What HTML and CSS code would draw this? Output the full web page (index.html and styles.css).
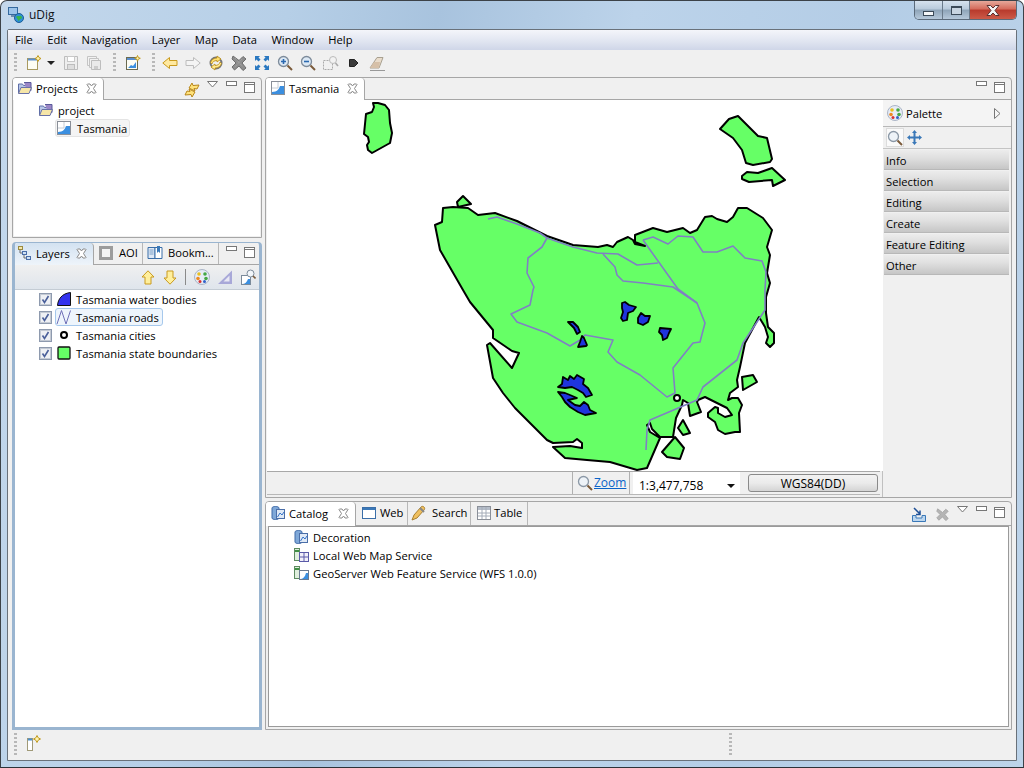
FILE: index.html
```html
<!DOCTYPE html>
<html lang="en">
<head>
<meta charset="utf-8">
<title>uDig</title>
<link rel="stylesheet" href="styles.css">
</head>
<body>
<svg class="defs" width="0" height="0">
  <defs>
    <symbol id="close" viewBox="0 0 11 11"><path d="M1.500 1 4 1 5.500 3 7 1 9.500 1 10 1.500 7.500 5.500 10 9.500 9.500 10 7 10 5.500 8 4 10 1.500 10 1 9.500 3.500 5.500 1 1.500Z" fill="#fff" stroke="#8a8a8a"/></symbol>
    <symbol id="chev" viewBox="0 0 11 7"><path d="M.5.5h10L5.500 6Z" fill="#fff" stroke="#777"/></symbol>
    <symbol id="min" viewBox="0 0 11 6"><rect x=".5" y=".5" width="10" height="4" fill="#fff" stroke="#777"/></symbol>
    <symbol id="max" viewBox="0 0 11 11"><rect x=".5" y=".5" width="10" height="10" fill="#fff" stroke="#777"/><path d="M1 2.500h9" stroke="#777"/></symbol>
    <symbol id="mapdoc" viewBox="0 0 16 16"><rect x="1.500" y="1.500" width="13" height="13" fill="#fff" stroke="#8a8f98"/><path d="M2 8h6V2" fill="none" stroke="#c6ccd4"/><path d="M2 14v-2C7 12 9 9 10 6h4v8Z" fill="#3b8fe0"/></symbol>
    <symbol id="folder" viewBox="0 0 16 16"><path d="M1.500 13V4h4l1 1.500H10V13Z" fill="#b8c7e8" stroke="#5f6fa8"/><path d="M7 2.500h7v8H10" fill="#9a86c6" stroke="#5a5a9a"/><path d="M1.500 13.500 4 7.500h10.500L12 13.500Z" fill="#f6e6a8" stroke="#6a72a8"/></symbol>
    <symbol id="mag" viewBox="0 0 16 16"><circle cx="6.500" cy="6.500" r="5" fill="#eef3f8" stroke="#8b98a6" stroke-width="1.300"/><path d="M10.500 10.500 15 15" stroke="#7a5a3a" stroke-width="2"/></symbol>
    <symbol id="db" viewBox="0 0 16 16"><path d="M2 3c0-2 7-2 7 0v10c0 2-7 2-7 0Z" fill="#7fa8d8" stroke="#3f6aa8"/><rect x="6.500" y="4.500" width="8" height="9" fill="#dfe9f6" stroke="#4a6ea8"/><path d="M7.500 12 10 8l2 2 2-3" fill="none" stroke="#3573c8"/></symbol>
    <symbol id="svcgrid" viewBox="0 0 16 16"><rect x="1.500" y="1.500" width="5" height="12" fill="#dfeedd" stroke="#5d8a60"/><path d="M2 4h4" stroke="#3f8f44" stroke-width="2"/><rect x="6.500" y="5.500" width="9" height="9" fill="#f2f0fa" stroke="#5a5aa8"/><path d="M11 6v8M7 10h8" stroke="#5a5aa8"/></symbol>
    <symbol id="svcmap" viewBox="0 0 16 16"><rect x="1.500" y="1.500" width="5" height="12" fill="#dfeedd" stroke="#5d8a60"/><path d="M2 4h4" stroke="#3f8f44" stroke-width="2"/><rect x="6.500" y="5.500" width="9" height="9" fill="#fff" stroke="#6a7a90"/><path d="M7 14c3 0 5-2 6-6h2v6Z" fill="#3b8fe0"/></symbol>
    <symbol id="check" viewBox="0 0 13 13"><rect x=".5" y=".5" width="12" height="12" fill="#dfe3ea" stroke="#8e9aae"/><rect x="1.500" y="1.500" width="10" height="10" fill="#eef0f4" stroke="#c4cad4"/><path d="M3.500 6.500 5.500 9.500 9.500 3" fill="none" stroke="#4a5f9a" stroke-width="1.600"/></symbol>
  </defs>
</svg>
<div class="window">
  <header class="titlebar">
    <svg class="appicon" width="16" height="16" viewBox="0 0 16 16"><rect x=".5" y=".5" width="9" height="7" fill="#9cc4ea" stroke="#34699e"/><rect x="3" y="8" width="4" height="2" fill="#6a8db0"/><circle cx="11" cy="11" r="4.500" fill="#2f8fd8" stroke="#1c5e96"/><path d="M8 10c2-2 3 0 4-1s2 1 2 2-2 0-3 3c-1 0-1-2-3-4Z" fill="#39b54a"/></svg>
    <span class="apptitle">uDig</span>
    <div class="winbtns">
      <div class="winbtn winmin"><span class="glyph-min"></span></div>
      <div class="winbtn winmax"><span class="glyph-max"></span></div>
      <div class="winbtn winclose"><svg width="14" height="11" viewBox="0 0 14 11"><path d="M1 .5h3.500L7 3 9.500.5H13L9 5.500 13 10.500H9.500L7 8 4.500 10.500H1L5 5.500Z" fill="#f4f4f4" stroke="#5a3030"/></svg></div>
    </div>
  </header>
  <div class="client">
    <nav class="menubar">
      <span>File</span><span>Edit</span><span>Navigation</span><span>Layer</span><span>Map</span><span>Data</span><span>Window</span><span>Help</span>
    </nav>
    <div class="toolbar">
      <i class="grip"></i>
      <div class="tbgroup first">
        <svg width="16" height="16" viewBox="0 0 16 16"><rect x="1.500" y="3.500" width="10" height="11" fill="#fdfdf4" stroke="#a89a60"/><path d="M2 4.500h9" stroke="#5a8fd0" stroke-width="2"/><path d="M12 .5l1 2 2 1-2 1-1 2-1-2-2-1 2-1Z" fill="#fff3b0" stroke="#c09a20"/></svg>
        <svg class="tbarrow" width="8" height="4" viewBox="0 0 8 4"><path d="M0 0h8L4 4Z" fill="#222"/></svg>
        <svg class="after-arrow" width="16" height="16" viewBox="0 0 16 16"><path d="M1.500 1.500h13v13h-13Z" fill="#eee" stroke="#bdbdbd"/><rect x="4.500" y="1.500" width="7" height="5" fill="#fff" stroke="#c8c8c8"/><rect x="4.500" y="9.500" width="7" height="5" fill="#ddd" stroke="#bdbdbd"/></svg>
        <svg width="16" height="16" viewBox="0 0 16 16"><path d="M1.500 1.500h9v9h-9Z" fill="#f2f2f2" stroke="#c4c4c4"/><path d="M3.500 3.500h9v9h-9Z" fill="#f2f2f2" stroke="#c4c4c4"/><path d="M5.500 5.500h9v9h-9Z" fill="#eaeaea" stroke="#bdbdbd"/><rect x="8" y="11" width="4" height="3" fill="#ccc"/></svg>
      </div>
      <i class="grip gap-grip"></i>
      <div class="tbgroup second">
        <svg width="16" height="16" viewBox="0 0 16 16"><rect x="1.500" y="2.500" width="11" height="12" fill="#fdfdf4" stroke="#6a6a50"/><path d="M2 4h10" stroke="#5a8fd0" stroke-width="2"/><path d="M3 13l3-3 2 1 3-4v6Z" fill="#3b8fe0"/><path d="M12.500.5l.8 2 2 .8-2 .8-.8 2-.8-2-2-.8 2-.8Z" fill="#fff3b0" stroke="#c09a20"/></svg>
      </div>
      <i class="grip gap-grip"></i>
      <div class="tbgroup third">
        <svg width="16" height="16" viewBox="0 0 16 16"><path d="M.8 8 7.500 2.500V5.500H15V10.500H7.500V13.500Z" fill="#ffe9a0" stroke="#c99a1e"/></svg>
        <svg width="16" height="16" viewBox="0 0 16 16"><path d="M15.200 8 8.500 2.500V5.500H1V10.500H8.500V13.500Z" fill="#f4f4f4" stroke="#bcbcbc"/></svg>
        <svg width="16" height="16" viewBox="0 0 16 16"><circle cx="8" cy="8" r="5.500" fill="none" stroke="#777" stroke-width="2"/><path d="M9 1 13 4 9 7V5.500C6 5.500 4.500 7 4 9L2.500 7.500C3.500 4.500 6 3 9 3Z" fill="#ffdf70" stroke="#b88a14" stroke-width=".8"/><path d="M7 15 3 12 7 9V10.500C10 10.500 11.500 9 12 7L13.500 8.500C12.500 11.500 10 13 7 13Z" fill="#ffe990" stroke="#b88a14" stroke-width=".8"/></svg>
        <svg width="16" height="16" viewBox="0 0 16 16"><path d="M2 1 8 5.500 12 1.500 15 4 11 8 15 13 12 15.500 8 11 3.500 15 1 12 5 8 1 4Z" fill="#8e8e8e" stroke="#6e6e6e"/><path d="M4 3 12 12M11 4 4 12" stroke="#a8a8a8" stroke-dasharray="1 1"/></svg>
        <svg width="16" height="16" viewBox="0 0 16 16"><path d="M1 1h5L4.500 2.500 6.500 4.500 4.500 6.500 2.500 4.500 1 6ZM15 1v5L13.500 4.500 11.500 6.500 9.500 4.500 11.500 2.500 10 1ZM1 15v-5l1.500 1.500 2-2 2 2-2 2L6 15ZM15 15h-5l1.500-1.500-2-2 2-2 2 2L15 10Z" fill="#2a78c0"/></svg>
        <svg width="16" height="16" viewBox="0 0 16 16"><circle cx="6.500" cy="6.500" r="5" fill="#dce8f4" stroke="#7d8b9a" stroke-width="1.300"/><path d="M4 6.500h5M6.500 4v5" stroke="#2a68b0" stroke-width="1.600"/><path d="M10.500 10.500 15 15" stroke="#7a5a3a" stroke-width="2"/></svg>
        <svg width="16" height="16" viewBox="0 0 16 16"><circle cx="6.500" cy="6.500" r="5" fill="#dce8f4" stroke="#7d8b9a" stroke-width="1.300"/><path d="M4 6.500h5" stroke="#2a68b0" stroke-width="1.600"/><path d="M10.500 10.500 15 15" stroke="#7a5a3a" stroke-width="2"/></svg>
        <svg width="16" height="16" viewBox="0 0 16 16"><rect x=".5" y="5.500" width="9" height="9" fill="none" stroke="#aaa" stroke-dasharray="2 1"/><circle cx="10" cy="5" r="3.500" fill="#f2f2f2" stroke="#bbb"/><path d="M12.500 8 15 11" stroke="#aaa" stroke-width="1.600"/></svg>
        <svg width="16" height="16" viewBox="0 0 16 16"><path d="M3.500 4.500h5L12 8l-3.500 3.500h-5Z" fill="#3b3b3b" stroke="#222"/></svg>
        <svg width="16" height="16" viewBox="0 0 16 16"><path d="M1 13 8 2.500h6L10 13Z" fill="#e9dccb" stroke="#a8a090"/><path d="M1 13 5 7h6l-1 6Z" fill="#d6c0a8"/><path d="M1 15.500h15" stroke="#999"/></svg>
      </div>
    </div>

    <main class="workbench">
      <section class="panel projects">
        <div class="tabrow">
          <div class="tab selected t-projects">
            <svg width="16" height="16"><use href="#folder"/></svg><span>Projects</span><svg class="x" width="11" height="11"><use href="#close"/></svg>
          </div>
          <div class="tabfill">
            <svg class="linkicon" width="16" height="16" viewBox="0 0 16 16"><path d="M8 1 9 3.500 15 3 13 7 10 6.500 11 9 5 6Z" fill="#ffe27a" stroke="#b8861a"/><path d="M8 15 7 12.500 1 13 3 9 6 9.500 5 7 11 10Z" fill="#ffe27a" stroke="#b8861a"/></svg>
            <svg class="viewchev" width="11" height="7"><use href="#chev"/></svg>
            <svg class="viewmin" width="11" height="6"><use href="#min"/></svg>
            <svg class="viewmax" width="11" height="11"><use href="#max"/></svg>
          </div>
        </div>
        <div class="panelbody tree">
          <div class="treerow level1"><svg width="16" height="16"><use href="#folder"/></svg><span>project</span></div>
          <div class="treerow level2"><div class="sel"><svg width="16" height="16"><use href="#mapdoc"/></svg><span>Tasmania</span></div></div>
        </div>
      </section>

      <section class="panel editor">
        <div class="tabrow">
          <div class="tab selected t-tasmania">
            <svg width="16" height="16"><use href="#mapdoc"/></svg><span>Tasmania</span><svg class="x" width="11" height="11"><use href="#close"/></svg>
          </div>
          <div class="tabfill">
            <svg class="viewmin" width="11" height="6"><use href="#min"/></svg>
            <svg class="viewmax" width="11" height="11"><use href="#max"/></svg>
          </div>
        </div>
        <div class="editorbody">
          <div class="mapcol">
            <svg class="map" width="616" height="371" viewBox="267 100 616 371">
              <g class="land">
                <path d="M373 103 378 103 385 105 389 110 390 123 392 133 390 143 372 153 368 150 367 145 369 142 368 137 364 134 366 114 372 112 374 107Z"/>
                <path d="M738 116 758 136 767 138 772 159 770 162 753 165 746 163 742 150 733 138 720 129 729 119Z"/>
                <path d="M742 176 747 172 758 173 772 168 785 180 773 186 772 180 749 182 742 179Z"/>
                <path d="M457 202 463 196 471 204 458 207Z"/>
                <path d="M443 208 453 207 468 208 478 215 495 213 517 221 547 236 573 245 598 247 607 245 613 247 617 242 628 237 633 240 635 244 645 246 635 242 635 235 653 228 667 232 683 228 690 233 697 230 705 217 712 216 717 219 727 222 733 217 738 208 747 208 763 218 772 230 767 247 770 255 767 273 770 283 766 297 766 313 768 327 774 333 774 343 770 347 766 343 768 337 765 327 759 317 745 343 740 367 737 380 738 387 730 393 728 400 732 398 738 398 742 405 739 413 740 432 735 432 725 434 718 430 715 422 708 417 708 413 715 407 718 408 718 413 725 417 732 415 727 408 717 403 705 397 698 400 697 402 701 412 690 416 688 403 683 400 682 405 676 418 673 437 660 437 652 429 650 423 647 425 650 432 660 438 647 468 637 470 610 462 587 460 565 458 553 447 570 446 582 448 582 443 577 439 573 442 553 443 547 440 515 408 503 393 493 378 487 345 490 343 512 368 519 353 512 351 493 338 493 330 470 302 463 290 440 250 435 225 442 222 443 208Z"/>
                <path d="M662 452 675 437 684 448 680 459 667 457Z"/>
                <path d="M683 420 690 433 683 435 678 428Z"/>
                <path d="M742 377 753 375 757 382 743 390Z"/>
              </g>
              <g class="roads">
                <path d="M488 219 497 217 517 224 540 233 547 238 573 247 597 253 618 254 637 265 658 263"/>
                <path d="M547 238 542 247 528 258 527 273 534 287 533 290 530 305 511 314 517 322 547 333 570 346 580 340 585 335 613 340 608 352 617 362 640 375 667 397 675 393 673 368 693 343 700 342 705 323 697 303 673 287 643 283 623 281 617 275 615 267 603 254"/>
                <path d="M643 240 678 289 697 303"/>
                <path d="M643 240 653 237 668 244 678 236 693 237 703 252 717 252 733 246 745 258 762 261 766 272 765 290 765 310 743 343 737 360 703 387 697 400 683 406 650 420 647 430 646 450"/>
              </g>
              <g class="water">
                <path d="M622 303 625 302 629 305 636 307 633 311 628 313 627 320 623 321 621 318 623 312 622 308Z"/>
                <path d="M641 313 645 316 650 316 648 322 643 325 638 323 638 318Z"/>
                <path d="M660 328 671 329 669 333 667 338 663 340 662 335 659 332Z"/>
                <path d="M568 322 573 322 578 327 580 332 577 334 574 328Z"/>
                <path d="M582 336 584 338 587 345 586 346 578 347 580 342Z"/>
                <path d="M558 387 562 384 563 377 568 380 570 376 574 379 577 375 584 379 583 384 588 388 592 395 586 397 583 393 578 390 572 387 565 388Z"/>
                <path d="M558 392 565 393 570 395 577 398 568 400 575 405 580 406 584 402 588 405 590 410 596 413 585 415 578 412 570 407 565 402 562 397Z"/>
              </g>
              <circle class="city" cx="677" cy="398" r="3"/>
            </svg>
            <div class="mapstatus">
              <div class="st-empty"></div>
              <div class="st-zoom"><svg width="16" height="16"><use href="#mag"/></svg><a href="#">Zoom</a></div>
              <div class="st-combo"><span>1:3,477,758</span><svg width="8" height="4" viewBox="0 0 8 4"><path d="M0 0h8L4 4Z" fill="#111"/></svg></div>
              <div class="st-crs">WGS84(DD)</div>
            </div>
          </div>
          <aside class="palette">
            <div class="pal-head">
              <svg width="16" height="16" viewBox="0 0 16 16"><circle cx="8" cy="8" r="7.500" fill="#e6ecf6" stroke="#aab4c6"/><circle cx="5" cy="5" r="1.800" fill="#e8c020"/><circle cx="11" cy="5" r="1.800" fill="#45a845"/><circle cx="4" cy="9.500" r="1.800" fill="#ee8a20"/><circle cx="12" cy="9.500" r="1.800" fill="#45a845"/><circle cx="6" cy="12.500" r="1.500" fill="#d83030"/><circle cx="10.500" cy="12.500" r="1.500" fill="#3060c8"/></svg>
              <span class="pal-title">Palette</span>
              <svg class="pal-arrow" width="7" height="11" viewBox="0 0 7 11"><path d="M.5.5 6 5.500.5 10.500Z" fill="#f6f6f6" stroke="#777"/></svg>
            </div>
            <div class="pal-tools">
              <div class="pal-on"><svg width="16" height="16"><use href="#mag"/></svg></div>
              <svg width="15" height="15" viewBox="0 0 15 15"><path d="M7.500 0 10 3H8.500V6.500H12V5L15 7.500 12 10V8.500H8.500V12H10L7.500 15 5 12H6.500V8.500H3V10L0 7.500 3 5V6.500H6.500V3H5Z" fill="#3a78b8"/></svg>
            </div>
            <div class="drawer">Info</div>
            <div class="drawer">Selection</div>
            <div class="drawer">Editing</div>
            <div class="drawer">Create</div>
            <div class="drawer">Feature Editing</div>
            <div class="drawer">Other</div>
          </aside>
        </div>
      </section>

      <section class="panel layers active">
        <div class="tabrow">
          <div class="tab selected t-layers">
            <svg width="16" height="16" viewBox="0 0 16 16"><rect x="1.500" y="1.500" width="4" height="3" fill="#f6e6a8" stroke="#9a8a40"/><rect x="5.500" y="6.500" width="4" height="3" fill="#cfe0f2" stroke="#4a6ea8"/><rect x="9.500" y="11.500" width="4" height="3" fill="#cfe0f2" stroke="#4a6ea8"/><path d="M3 5v3h2M7 10v3h2" fill="none" stroke="#6a6a6a"/></svg><span>Layers</span><svg class="x" width="11" height="11"><use href="#close"/></svg>
          </div>
          <div class="tab t-aoi"><svg width="16" height="16" viewBox="0 0 16 16"><rect x="2.500" y="2.500" width="11" height="11" fill="#f4f4f4" stroke="#9c9c9c" stroke-width="3"/></svg><span>AOI</span></div>
          <div class="tab t-book"><svg width="16" height="16" viewBox="0 0 16 16"><path d="M1 2.500h7v11H1Z" fill="#dfe9f6" stroke="#3a6ea8"/><path d="M8 2.500h7v11H8Z" fill="#fff" stroke="#3a6ea8"/><path d="M2.500 5h4M2.500 7h4M2.500 9h4" stroke="#7aa0c8"/><path d="M10 1h3v7l-1.500-1.500L10 8Z" fill="#3a78b8"/></svg><span>Bookm...</span></div>
          <div class="tabfill">
            <svg class="viewmin" width="11" height="6"><use href="#min"/></svg>
            <svg class="viewmax" width="11" height="11"><use href="#max"/></svg>
          </div>
        </div>
        <div class="layerbar">
          <svg width="14" height="15" viewBox="0 0 14 15"><path d="M7 .8 13 7H10V14H4V7H1Z" fill="#ffef9c" stroke="#c99a1e"/></svg>
          <svg class="arrowdown" width="14" height="15" viewBox="0 0 14 15"><path d="M7 14.200 13 8H10V1H4V8H1Z" fill="#ffef9c" stroke="#c99a1e"/></svg>
          <i class="barsep"></i>
          <svg width="16" height="16" viewBox="0 0 16 16"><circle cx="8" cy="8" r="7.500" fill="#e6ecf6" stroke="#aab4c6"/><circle cx="5" cy="5" r="1.800" fill="#e8c020"/><circle cx="11" cy="5" r="1.800" fill="#45a845"/><circle cx="4" cy="9.500" r="1.800" fill="#ee8a20"/><circle cx="12" cy="9.500" r="1.800" fill="#45a845"/><circle cx="6" cy="12.500" r="1.500" fill="#d83030"/><circle cx="10.500" cy="12.500" r="1.500" fill="#3060c8"/></svg>
          <svg width="16" height="16" viewBox="0 0 16 16"><path d="M15 1.500V15H1Z" fill="#a8a8d8"/><path d="M12.500 6.500V12.500H6.500Z" fill="#e8e8f4"/></svg>
          <svg width="16" height="16" viewBox="0 0 16 16"><rect x="1.500" y="6.500" width="9" height="9" fill="#fff" stroke="#7a8a9a"/><path d="M2 15c3 0 5-2 6-5h2v5Z" fill="#3b8fe0"/><circle cx="10.500" cy="4.500" r="3.500" fill="#f2f6fa" stroke="#7d8b9a"/><path d="M13 7l2.500 2.500" stroke="#7a5a3a" stroke-width="1.600"/></svg>
        </div>
        <div class="panelbody layerlist">
          <div class="layerrow">
            <svg class="chk" width="13" height="13"><use href="#check"/></svg>
            <svg width="16" height="16" viewBox="0 0 16 16"><path d="M1.500 14.500C2 8 6 2.500 14.500 1.500V14.500Z" fill="#3333ee" stroke="#111"/></svg>
            <span>Tasmania water bodies</span>
          </div>
          <div class="layerrow">
            <svg class="chk" width="13" height="13"><use href="#check"/></svg>
            <div class="sel blue">
              <svg width="16" height="16" viewBox="0 0 16 16"><path d="M1 15 5.500 1.500 10 15 14.500 1.500" fill="none" stroke="#7070b8"/></svg>
              <span>Tasmania roads</span>
            </div>
          </div>
          <div class="layerrow">
            <svg class="chk" width="13" height="13"><use href="#check"/></svg>
            <svg width="16" height="16" viewBox="0 0 16 16"><circle cx="8" cy="8" r="3" fill="#fff" stroke="#000" stroke-width="2"/></svg>
            <span>Tasmania cities</span>
          </div>
          <div class="layerrow">
            <svg class="chk" width="13" height="13"><use href="#check"/></svg>
            <svg width="16" height="16" viewBox="0 0 16 16"><rect x="2" y="2" width="12" height="12" rx="1" fill="#66ff66" stroke="#111" stroke-width="1.300"/></svg>
            <span>Tasmania state boundaries</span>
          </div>
        </div>
      </section>

      <section class="panel catalog">
        <div class="tabrow tall">
          <div class="tab selected t-catalog"><svg width="16" height="16"><use href="#db"/></svg><span>Catalog</span><svg class="x" width="11" height="11"><use href="#close"/></svg></div>
          <div class="tab t-web"><svg width="16" height="16" viewBox="0 0 16 16"><rect x="1.500" y="2.500" width="13" height="11" fill="#fff" stroke="#3a6ea8"/><path d="M2 4h12" stroke="#3a78b8" stroke-width="2"/></svg><span>Web</span></div>
          <div class="tab t-search"><svg width="16" height="16" viewBox="0 0 16 16"><path d="M1 15 3 10 10 2c2-2 5 1 3 3L6 13Z" fill="#f0c060" stroke="#a88030"/><path d="M9 3l4 4" stroke="#888" stroke-width="2"/></svg><span>Search</span></div>
          <div class="tab t-table"><svg width="16" height="16" viewBox="0 0 16 16"><rect x="1.500" y="1.500" width="13" height="13" fill="#fff" stroke="#8a8f98"/><path d="M2 3.500h12" stroke="#b4bcc8" stroke-width="3"/><path d="M2 8h12M2 11h12M6 2v12M10 2v12" stroke="#a4acb8"/></svg><span>Table</span></div>
          <div class="tabfill">
            <svg class="importicon" width="16" height="16" viewBox="0 0 16 16"><path d="M1.500 8.500V14.500H14.500V8.500H11V11H5V8.500Z" fill="#bcd6ee" stroke="#3a78b8"/><path d="M3 1 9 7M9 3.500V7.500H5" fill="none" stroke="#1e4f96" stroke-width="1.500"/></svg>
            <svg class="delicon" width="13" height="13" viewBox="0 0 16 16"><path d="M2 1 8 5.500 12 1.500 15 4 11 8 15 13 12 15.500 8 11 3.500 15 1 12 5 8 1 4Z" fill="#b4b4b4" stroke="#a4a4a4"/></svg>
            <svg class="viewchev" width="11" height="7"><use href="#chev"/></svg>
            <svg class="viewmin" width="11" height="6"><use href="#min"/></svg>
            <svg class="viewmax" width="11" height="11"><use href="#max"/></svg>
          </div>
        </div>
        <div class="catalogbody">
          <div class="catrow"><svg width="16" height="16"><use href="#db"/></svg><span>Decoration</span></div>
          <div class="catrow"><svg width="16" height="16"><use href="#svcgrid"/></svg><span>Local Web Map Service</span></div>
          <div class="catrow"><svg width="16" height="16"><use href="#svcmap"/></svg><span>GeoServer Web Feature Service (WFS 1.0.0)</span></div>
        </div>
      </section>
    </main>

    <footer class="statusbar">
      <i class="grip tallgrip"></i>
      <svg class="fastview" width="16" height="16" viewBox="0 0 16 16"><rect x="1.500" y="3.500" width="5" height="12" fill="#fff" stroke="#a09a78"/><path d="M2 4.500h4" stroke="#4a8fd0" stroke-width="2"/><path d="M11 .5l1.200 2.300 2.300 1.200-2.300 1.200L11 7.500 9.800 5.200 7.500 4l2.300-1.200Z" fill="#fff3b0" stroke="#c09a20"/></svg>
      <i class="grip tallgrip rightgrip"></i>
    </footer>
  </div>
</div>
</body>
</html>
```

FILE: styles.css
```css
* { box-sizing: border-box; }
html, body { margin: 0; padding: 0; }
body {
  width: 1024px;
  height: 768px;
  overflow: hidden;
  font-family: "Open Sans", "Noto Sans", sans-serif;
  font-size: 11.2px;
  color: #000;
  background: #fff;
}
svg { display: block; flex: none; }
.defs { position: absolute; }

.window {
  width: 1024px;
  height: 768px;
  display: flex;
  flex-direction: column;
  padding: 0 6px 6px;
  border: 1px solid #3c4248;
  border-bottom-color: #2c3238;
  border-radius: 7px 7px 0 0;
  background: linear-gradient(100deg, #c4d8ec 0%, #b6cfe7 25%, #a8c3de 38%, #bcd3ea 55%, #b4cde6 75%, #bdd4ea 100%);
}

.titlebar { height: 28px; display: flex; align-items: flex-start; flex: none; }
.appicon { margin: 6px 5px 0 1px; }
.apptitle { font-size: 12px; margin-top: 5px; color: #101418; }
.winbtns {
  margin-left: auto;
  display: flex;
  height: 19px;
  border: 1px solid #5b6a7a;
  border-top: none;
  border-radius: 0 0 5px 5px;
  overflow: hidden;
  width: 103px;
}
.winbtn { display: flex; align-items: center; justify-content: center; height: 100%; }
.winmin { width: 28px; background: linear-gradient(#d6e2ee, #b8cadb 45%, #8ea4b8 50%, #b6c8da); border-right: 1px solid #6a7a8a; }
.winmax { width: 27px; background: linear-gradient(#d6e2ee, #b8cadb 45%, #8ea4b8 50%, #b6c8da); border-right: 1px solid #6a7a8a; }
.winclose { flex: 1; background: linear-gradient(#e6a89a, #d46a5a 45%, #b83a2c 50%, #cc5a48); }
.glyph-min { width: 11px; height: 5px; margin-top: 6px; border: 1px solid #3c4a58; background: #f4f6f8; }
.glyph-max { width: 11px; height: 9px; border: 1px solid #3c4a58; border-top-width: 2px; background: #c8d4e0; }

.client {
  flex: 1;
  min-height: 0;
  display: flex;
  flex-direction: column;
  background: #f0f0f0;
  border: 1px solid #69717a;
  border-radius: 2px 2px 0 0;
}

.menubar {
  height: 20px;
  flex: none;
  display: flex;
  align-items: center;
  padding: 0 0 2px 7px;
  gap: 14.5px;
  background: linear-gradient(#f4f5fa, #dfe4f0 60%, #cfd6e8);
}

.toolbar {
  height: 26px;
  flex: none;
  display: flex;
  align-items: center;
  padding-left: 6px;
  background: #f0f0f0;
}
.grip {
  display: block;
  width: 3px;
  height: 20px;
  flex: none;
  background: repeating-linear-gradient(#b8b8b8 0 2px, transparent 2px 4px);
}
.tbgroup { display: flex; align-items: center; gap: 7px; }
.tbgroup.first { margin-left: 9px; }
.tbarrow { margin-left: -2px; }
.after-arrow { margin-left: 1px; }
.gap-grip { margin-left: 11px; }
.tbgroup.second { margin-left: 9px; }
.tbgroup.third { margin-left: 7px; }

.workbench {
  flex: 1;
  min-height: 0;
  display: grid;
  grid-template-columns: 250px 747px;
  grid-template-rows: 161px 4px 256px 3px 229px;
  column-gap: 3px;
  padding: 1px 0 0 4px;
}
.projects { grid-column: 1; grid-row: 1; }
.layers { grid-column: 1; grid-row: 3 / 6; }
.editor { grid-column: 2; grid-row: 1 / 4; }
.catalog { grid-column: 2; grid-row: 5; }

.panel {
  display: flex;
  flex-direction: column;
  min-height: 0;
  border: 1px solid #a6a6a6;
  border-radius: 4px 4px 0 0;
  background: #f0f0f0;
}
.tabrow {
  height: 22px;
  flex: none;
  display: flex;
  border-bottom: 1px solid #a6a6a6;
}
.tabrow.tall { height: 24px; }
.tab {
  display: flex;
  align-items: center;
  gap: 5px;
  padding: 0 0 2px 4px;
  height: 100%;
  border-right: 1px solid #b8b8b8;
  flex: none;
}
.tab.selected {
  height: calc(100% + 1px);
  gap: 3px;
  padding-right: 6px;
  background: #fff;
  border-right: 1px solid #a6a6a6;
  border-radius: 3px 4px 0 0;
  position: relative;
  z-index: 1;
}
.tab .x { margin-left: auto; }
.t-projects { width: 91px; }
.t-tasmania { width: 99px; }
.tab.t-layers { width: 79px; padding-left: 2px; background: linear-gradient(#d3e2f1, #eef4fa); }
.t-aoi { width: 49px; }
.t-book { width: 76px; }
.t-catalog { width: 90px; }
.t-web { width: 52px; gap: 3px; padding-left: 5px; }
.t-search { width: 63px; padding-left: 3px; }
.t-table { width: 57px; gap: 2px; padding-left: 5px; }

.tabfill { flex: 1; display: flex; align-items: flex-start; justify-content: flex-end; padding-right: 6px; }
.viewmin { margin-top: 3px; }
.viewmax { margin: 4px 0 0 7px; }
.viewchev { margin: 3px 8px 0 0; }
.linkicon { margin: 4px 7px 0 0; }
.tall .viewmin { margin-top: 4px; }
.tall .viewmax { margin-top: 5px; }
.tall .viewchev { margin-top: 4px; }
.importicon { margin: 5px 9px 0 0; }
.delicon { margin: 6px 8px 0 0; }

.panelbody { flex: 1; background: #fff; min-height: 0; margin: 0 1px 1px; }
.tree { padding-top: 1px; }
.treerow { height: 18px; display: flex; align-items: center; }
.treerow svg { margin-right: 4px; }
.level1 { padding-left: 24px; }
.level2 { padding-left: 41px; }
.sel {
  display: flex;
  align-items: center;
  height: 18px;
  padding-right: 2px;
  border: 1px solid #e4e4e4;
  border-radius: 3px;
  background: #f4f4f4;
}
.treerow .sel svg { margin-right: 5px; }
.sel.blue { margin-left: -1px; border-color: #a6c8ec; background: #eef5fc; padding-right: 3px; }
.sel.blue svg { margin-right: 4px; }

.layers { border-width: 1px 3px 3px; border-color: #9ab5d0; }
.layers .tabfill { padding-right: 4px; }
.layerbar {
  height: 25px;
  flex: none;
  display: flex;
  align-items: center;
  justify-content: flex-end;
  gap: 7px;
  padding-right: 3px;
  background: linear-gradient(#f0f0f0, #dfe5ec);
  border-bottom: 1px solid #c4ccd4;
}
.arrowdown { margin-left: 1px; }
.barsep { width: 1px; height: 16px; background: #8a8a8a; margin: 0 1px; }
.layerlist { margin: 0; }
.layerrow { height: 18px; display: flex; align-items: center; padding-left: 24px; }
.layerrow > svg:nth-child(2) { margin-right: 4px; }
.chk { margin-right: 4px; }

.editorbody { flex: 1; min-height: 0; display: flex; background: #f0f0f0; }
.mapcol { width: 617px; display: flex; flex-direction: column; padding-left: 1px; flex: none; border-right: 1px solid #c0c0c0; }
.map { background: #fff; }
.land path { fill: #66ff66; stroke: #000; stroke-width: 2; stroke-linejoin: round; }
.roads path { fill: none; stroke: #8080c4; stroke-width: 1.600; stroke-linejoin: round; }
.water path { fill: #1f35dd; stroke: #000; stroke-width: 1.800; stroke-linejoin: round; }
.city { fill: #fff; stroke: #000; stroke-width: 2; }

.mapstatus {
  height: 24px;
  flex: none;
  display: flex;
  border-top: 1px solid #a8a8a8;
  border-bottom: 1px solid #b8b8b8;
  margin-right: 2px;
  background: #f0f0f0;
}
.st-empty { width: 306px; border-right: 1px solid #b0b0b0; }
.st-zoom { width: 57px; display: flex; align-items: center; padding-left: 4px; border-right: 1px solid #b0b0b0; }
.st-zoom a { color: #0a63c9; font-size: 12px; margin: -2px 0 0 1px; }
.st-combo {
  width: 107px;
  margin-left: 3px;
  background: #fff;
  display: flex;
  align-items: center;
  justify-content: space-between;
  padding: 5px 5px 0 6px;
  font-size: 12px;
}
.st-crs {
  width: 130px;
  height: 18px;
  margin: 2px 0 0 8px;
  border: 1px solid #8a8a8a;
  border-radius: 3px;
  background: linear-gradient(#f2f2f2, #ebebeb 50%, #d4d4d4);
  display: flex;
  align-items: center;
  justify-content: center;
  font-size: 12px;
}

.palette { flex: 1; display: flex; flex-direction: column; }
.pal-head {
  height: 27px;
  flex: none;
  display: flex;
  align-items: center;
  gap: 3px;
  padding-left: 4px;
  border-bottom: 1px solid #b8b8b8;
  background: #f4f4f4;
}
.pal-arrow { margin-left: auto; margin-right: 10px; }
.pal-tools { height: 22px; flex: none; display: flex; align-items: center; gap: 3px; padding-left: 3px; border-bottom: 1px solid #c4c4c4; }
.pal-on { width: 18px; height: 19px; display: flex; align-items: center; justify-content: center; background: #fafafa; border: 1px solid #dcdcdc; }
.drawer {
  height: 20px;
  flex: none;
  margin: 1px 2px 0 1px;
  padding: 1px 0 0 2px;
  display: flex;
  align-items: center;
  background: linear-gradient(#ececec, #e0e0e0 40%, #c6c6c6);
  border-bottom: 1px solid #b8b8b8;
}

.catalogbody { flex: 1; margin: 0 2px 2px; background: #fff; border: 1px solid #9a9a9a; padding-top: 1px; }
.catrow { height: 18px; display: flex; align-items: center; padding-left: 24px; gap: 4px; }

.statusbar { height: 30px; flex: none; display: flex; align-items: center; padding-left: 6px; }
.tallgrip { height: 24px; }
.fastview { margin: -4px 0 0 9px; }
.rightgrip { margin-left: 687px; }
```
